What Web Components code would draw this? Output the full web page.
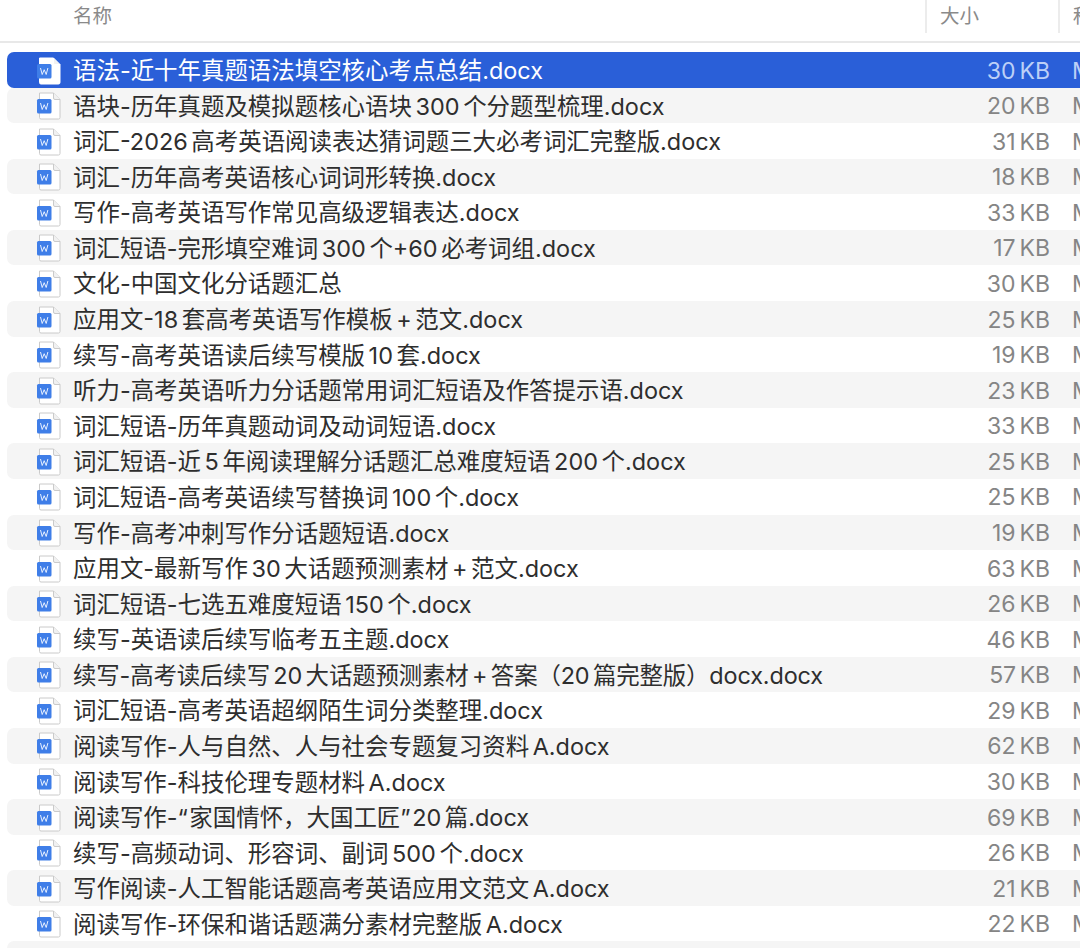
<!DOCTYPE html>
<html><head><meta charset="utf-8"><style>
html,body{margin:0;padding:0;background:#fff;overflow:hidden;height:948px}
body{font-family:Inter,"Noto Sans CJK SC",sans-serif}
</style></head><body>
<finder-window></finder-window>
<script>
const rows=[
["语法-近十年真题语法填空核心考点总结.docx","30"],
["语块-历年真题及模拟题核心语块 300 个分题型梳理.docx","20"],
["词汇-2026 高考英语阅读表达猜词题三大必考词汇完整版.docx","31"],
["词汇-历年高考英语核心词词形转换.docx","18"],
["写作-高考英语写作常见高级逻辑表达.docx","33"],
["词汇短语-完形填空难词 300 个+60 必考词组.docx","17"],
["文化-中国文化分话题汇总","30"],
["应用文-18 套高考英语写作模板 + 范文.docx","25"],
["续写-高考英语读后续写模版 10 套.docx","19"],
["听力-高考英语听力分话题常用词汇短语及作答提示语.docx","23"],
["词汇短语-历年真题动词及动词短语.docx","33"],
["词汇短语-近 5 年阅读理解分话题汇总难度短语 200 个.docx","25"],
["词汇短语-高考英语续写替换词 100 个.docx","25"],
["写作-高考冲刺写作分话题短语.docx","19"],
["应用文-最新写作 30 大话题预测素材 + 范文.docx","63"],
["词汇短语-七选五难度短语 150 个.docx","26"],
["续写-英语读后续写临考五主题.docx","46"],
["续写-高考读后续写 20 大话题预测素材 + 答案（20 篇完整版）docx.docx","57",-0.15],
["词汇短语-高考英语超纲陌生词分类整理.docx","29"],
["阅读写作-人与自然、人与社会专题复习资料 A.docx","62"],
["阅读写作-科技伦理专题材料 A.docx","30"],
["阅读写作-“家国情怀，大国工匠”20 篇.docx","69"],
["续写-高频动词、形容词、副词 500 个.docx","26"],
["写作阅读-人工智能话题高考英语应用文范文 A.docx","21"],
["阅读写作-环保和谐话题满分素材完整版 A.docx","22"],
];
class DocIcon extends HTMLElement{constructor(){super();this.attachShadow({mode:'open'}).innerHTML=`<style>:host{display:block;width:26px;height:28px}svg{display:block}</style>
<svg width="26" height="28" viewBox="0 0 26 28"><path d="M3.500 1h14l6.500 6.500v18a1.500 1.500 0 0 1-1.500 1.500h-17.500a1.500 1.500 0 0 1-1.500-1.500z" fill="#fff" stroke="var(--page-stroke,#cacaca)"/><path d="M17.500 1v5a1.500 1.500 0 0 0 1.500 1.500h5" fill="#f1f1f1" stroke="var(--page-stroke,#cacaca)"/><rect x="1" y="7" width="14.500" height="14.500" rx="1.500" fill="#3f7ee8"/><path d="M4.500 11l1.700 6.500 2-4.800 2 4.800 1.700-6.500" fill="none" stroke="#e6efff" stroke-width="1"/></svg>`}}
customElements.define('doc-icon',DocIcon);
class ColHead extends HTMLElement{constructor(){super();this.attachShadow({mode:'open'}).innerHTML=`<style>:host{display:block;padding-left:13px;border-left:2px solid #ececec;height:33px;line-height:33px;font-size:19.500px;color:#8a8a8a;white-space:nowrap;overflow:hidden;box-sizing:border-box}:host([first]){border-left:0;padding-left:0}</style><slot></slot>`}}
customElements.define('col-head',ColHead);
class FileRow extends HTMLElement{constructor(){super();this.attachShadow({mode:'open'}).innerHTML=`<style>
:host{display:grid;grid-template-columns:29px 37px 1fr 70px 60px;align-items:center;height:35.580px;margin-left:7px;margin-right:-36px;border-radius:7px 0 0 7px;font-size:23.450px;word-spacing:-3px;color:#2e2e2e;white-space:nowrap;--page-stroke:#cacaca;overflow:hidden}
:host([odd]){background:#f5f5f5}
:host([selected]){background:#2a5fd8;color:#fff;--page-stroke:#fff}
.ic{grid-column:2}
.name{grid-column:3;min-width:0;padding-bottom:3px}
.sz{grid-column:4;text-align:right;color:#858585;font-size:23px;word-spacing:-2.500px;margin-right:6px}
.kind{width:40px;margin-left:16px;color:#858585;font-size:23px;overflow:hidden}
:host([selected]) .sz,:host([selected]) .kind{color:#bcd0f7}
</style><div class="ic"><doc-icon></doc-icon></div><div class="name"><slot></slot></div><div class="sz"></div><div class="kind">Microsoft</div>`}
connectedCallback(){this.shadowRoot.querySelector('.sz').textContent=this.getAttribute('size')+' KB'}}
customElements.define('file-row',FileRow);
class FinderWindow extends HTMLElement{constructor(){super();const r=this.attachShadow({mode:'open'});r.innerHTML=`<style>
:host{display:block;width:1080px;height:948px;overflow:hidden}
.head{display:grid;grid-template-columns:925px 133px 1fr;height:43px;border-bottom:2px solid #e8e8e8;box-sizing:border-box}
.head col-head[first]{padding-left:73px}
.list{padding-top:9px}
.q{letter-spacing:1.500px}
</style><div class="head"><col-head first>名称</col-head><col-head>大小</col-head><col-head>种类</col-head></div><div class="list"></div>`;
const l=r.querySelector('.list');rows.forEach((x,i)=>{const e=document.createElement('file-row');
e.innerHTML=x[0].replace(/[“”]/g,m=>`<span class="q">${m}</span>`);
if(x[2])e.style.letterSpacing=x[2]+'px';
e.setAttribute('size',x[1]);if(i==0)e.setAttribute('selected','');else if(i%2)e.setAttribute('odd','');l.append(e)});
const t=document.createElement('file-row');t.setAttribute('odd','');t.setAttribute('size','');l.append(t);['.ic','.sz','.kind'].forEach(s=>t.shadowRoot.querySelector(s).style.visibility='hidden');}}
customElements.define('finder-window',FinderWindow);
</script></body></html>
